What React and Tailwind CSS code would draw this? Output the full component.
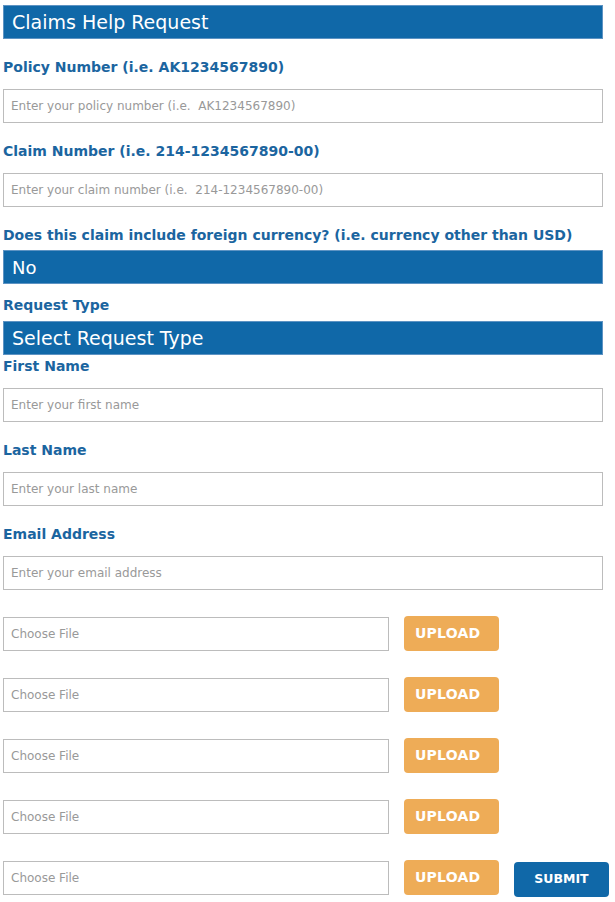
import React from "react";

const font = { fontFamily: '"DejaVu Sans", Verdana, sans-serif' };

const Label = ({ children, className = "" }) => (
  <div className={`text-[14px] leading-[20px] font-bold text-[#1b65a0] ${className}`}>
    {children}
  </div>
);

const TextInput = ({ placeholder, className = "" }) => (
  <input
    type="text"
    placeholder={placeholder}
    className={`block w-full h-[34px] border border-[#bcbcbc] bg-white px-[7px] text-[12px] text-[#555] placeholder:text-[#999] outline-none ${className}`}
    style={font}
  />
);

const BlueBar = ({ children, className = "" }) => (
  <div
    className={`h-[34px] w-full bg-[#1068a8] border border-[#5d93c3] flex items-center pl-[8px] text-white ${className}`}
  >
    {children}
  </div>
);

const FileRow = ({ last }) => (
  <div className="flex items-start mt-[26px]">
    <div className="shrink-0 mt-[1px] w-[386px] h-[34px] border border-[#bcbcbc] flex items-center px-[7px] text-[12px] text-[#999]">
      Choose File
    </div>
    <button className="shrink-0 ml-[15px] w-[95px] h-[35px] rounded-[4px] bg-[#eeac57] text-white font-bold text-[14px] tracking-[0.2px] text-left pl-[11px]">
      UPLOAD
    </button>
    {last && (
      <button className="shrink-0 ml-[15px] w-[95px] h-[35px] mt-[2px] rounded-[4px] bg-[#1068a8] text-white font-bold text-[12.5px]">
        SUBMIT
      </button>
    )}
  </div>
);

export default function App() {
  return (
    <div className="bg-white min-h-[902px] px-[3px] pt-[5px] w-[615px]" style={font}>
      <div className="w-[600px]">
        <BlueBar className="text-[19px]">Claims Help Request</BlueBar>

        <Label className="mt-[18px]">Policy Number (i.e. AK1234567890)</Label>
        <TextInput className="mt-[12px]" placeholder="Enter your policy number (i.e.  AK1234567890)" />

        <Label className="mt-[18px]">Claim Number (i.e. 214-1234567890-00)</Label>
        <TextInput className="mt-[12px]" placeholder="Enter your claim number (i.e.  214-1234567890-00)" />

        <Label className="mt-[18px]">
          Does this claim include foreign currency? (i.e. currency other than USD)
        </Label>
        <BlueBar className="mt-[5px] text-[18px]">No</BlueBar>

        <Label className="mt-[11px]">Request Type</Label>
        <BlueBar className="mt-[6px] text-[19px]">Select Request Type</BlueBar>

        <Label className="mt-[1px]">First Name</Label>
        <TextInput className="mt-[12px]" placeholder="Enter your first name" />

        <Label className="mt-[18px]">Last Name</Label>
        <TextInput className="mt-[12px]" placeholder="Enter your last name" />

        <Label className="mt-[18px]">Email Address</Label>
        <TextInput className="mt-[12px]" placeholder="Enter your email address" />

        {[0, 1, 2, 3, 4].map((i) => (
          <FileRow key={i} last={i === 4} />
        ))}
      </div>
    </div>
  );
}
